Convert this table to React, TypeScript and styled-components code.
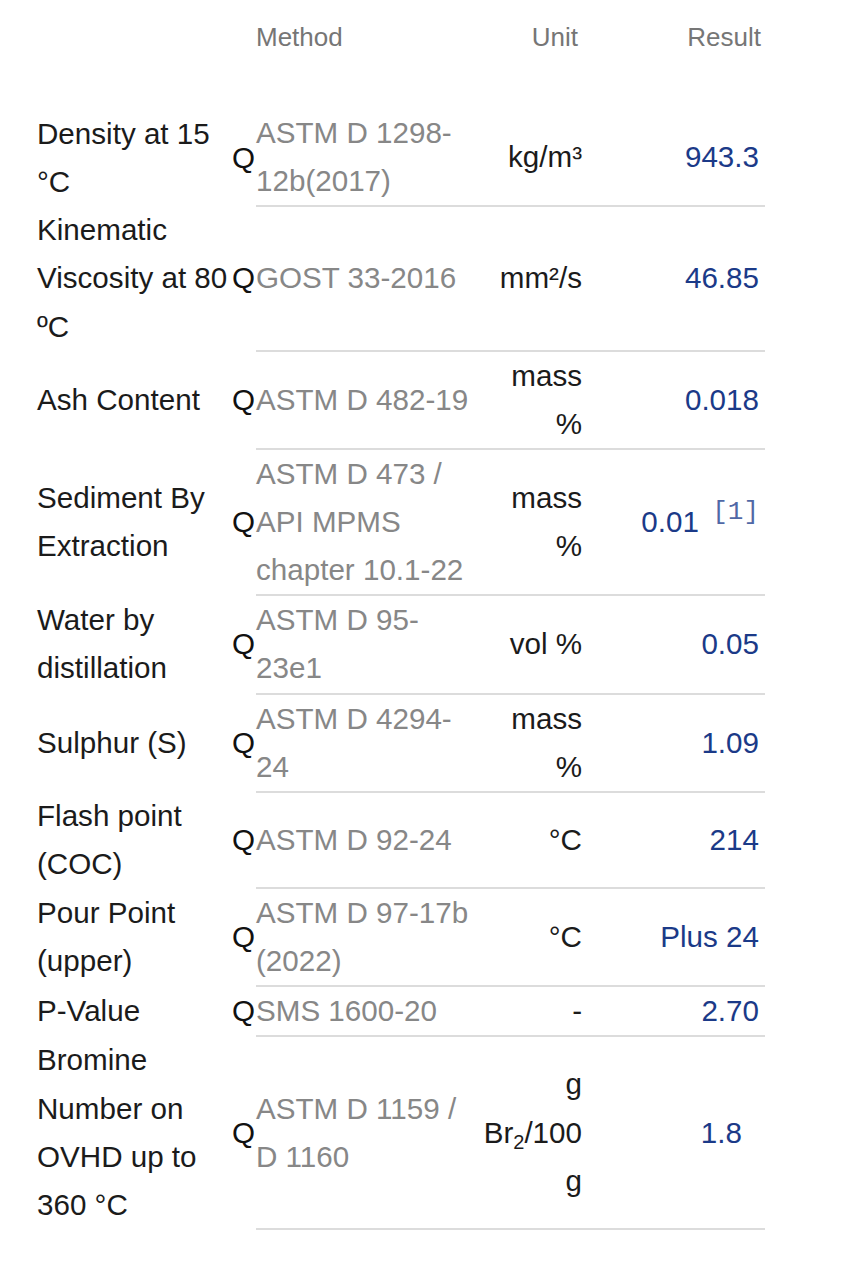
import React from "react";
import styled, { createGlobalStyle } from "styled-components";

const GlobalStyle = createGlobalStyle`
  html, body {
    margin: 0;
    padding: 0;
    background: #ffffff;
  }
  body {
    font-family: "Liberation Sans", Arial, Helvetica, sans-serif;
  }
`;

const Page = styled.div`
  padding: 13px 0 24px 37px;
`;

const Table = styled.table`
  border-collapse: collapse;
  table-layout: fixed;
  width: 728px;
`;

const Col = styled.col<{ $w: number }>`
  width: ${(p) => p.$w}px;
`;

const HeadCell = styled.th<{ $align?: "left" | "right" }>`
  font-size: 26px;
  font-weight: 400;
  line-height: 48px;
  color: #767676;
  text-align: ${(p) => p.$align ?? "left"};
  padding: 0 ${(p) => (p.$align === "right" ? "4px" : "0")} 48px 0;
  vertical-align: middle;
`;

const Cell = styled.td`
  font-size: 29.6px;
  line-height: 48.12px;
  padding: 0;
  vertical-align: middle;
`;

const LabelCell = styled(Cell)`
  color: #1b1b1b;
`;

const QCell = styled(Cell)`
  color: #111111;
`;

const RuledCell = styled(Cell)`
  border-bottom: 2px solid #dcdcdc;
`;

const MethodCell = styled(RuledCell)`
  color: #878787;
`;

const UnitCell = styled(RuledCell)`
  color: #1b1b1b;
  text-align: right;
`;

const ResultCell = styled(RuledCell)<{ $inset?: number }>`
  color: #1b3a88;
  text-align: right;
  padding-right: ${(p) => 6 + (p.$inset ?? 0)}px;
`;

const Ref = styled.sup`
  font-family: "Liberation Mono", "DejaVu Sans Mono", monospace;
  font-size: 26px;
  line-height: 1;
  color: #5068a6;
  vertical-align: 13px;
  margin-left: 5px;
`;

const Sub = styled.sub`
  font-size: 20px;
  line-height: 0;
  vertical-align: -6px;
`;

type Row = {
  label: React.ReactNode;
  method: React.ReactNode;
  unit: React.ReactNode;
  result: React.ReactNode;
  inset?: number;
};

const rows: Row[] = [
  {
    label: "Density at 15 °C",
    method: (
      <>
        ASTM D 1298-<wbr />12b(2017)
      </>
    ),
    unit: "kg/m³",
    result: "943.3",
  },
  {
    label: "Kinematic Viscosity at 80 ºC",
    method: "GOST 33-2016",
    unit: "mm²/s",
    result: "46.85",
  },
  {
    label: "Ash Content",
    method: "ASTM D 482-19",
    unit: "mass %",
    result: "0.018",
  },
  {
    label: "Sediment By Extraction",
    method: "ASTM D 473 / API MPMS chapter 10.1-22",
    unit: "mass %",
    result: (
      <>
        0.01 <Ref>[1]</Ref>
      </>
    ),
  },
  {
    label: "Water by distillation",
    method: (
      <>
        ASTM D 95-<wbr />23e1
      </>
    ),
    unit: "vol %",
    result: "0.05",
  },
  {
    label: "Sulphur (S)",
    method: (
      <>
        ASTM D 4294-<wbr />24
      </>
    ),
    unit: "mass %",
    result: "1.09",
  },
  {
    label: "Flash point (COC)",
    method: "ASTM D 92-24",
    unit: "°C",
    result: "214",
  },
  {
    label: "Pour Point (upper)",
    method: "ASTM D 97-17b (2022)",
    unit: "°C",
    result: "Plus 24",
  },
  {
    label: "P-Value",
    method: "SMS 1600-20",
    unit: "-",
    result: "2.70",
  },
  {
    label: "Bromine Number on OVHD up to 360 °C",
    method: "ASTM D 1159 / D 1160",
    unit: (
      <>
        g Br<Sub>2</Sub>/100 g
      </>
    ),
    result: "1.8",
    inset: 17,
  },
];

export default function App() {
  return (
    <>
      <GlobalStyle />
      <Page>
        <Table>
          <colgroup>
            <Col $w={195} />
            <Col $w={24} />
            <Col $w={224} />
            <Col $w={102} />
            <Col $w={183} />
          </colgroup>
          <thead>
            <tr>
              <HeadCell />
              <HeadCell />
              <HeadCell>Method</HeadCell>
              <HeadCell $align="right">Unit</HeadCell>
              <HeadCell $align="right">Result</HeadCell>
            </tr>
          </thead>
          <tbody>
            {rows.map((r, i) => (
              <tr key={i}>
                <LabelCell>{r.label}</LabelCell>
                <QCell>Q</QCell>
                <MethodCell>{r.method}</MethodCell>
                <UnitCell>{r.unit}</UnitCell>
                <ResultCell $inset={r.inset}>{r.result}</ResultCell>
              </tr>
            ))}
          </tbody>
        </Table>
      </Page>
    </>
  );
}
